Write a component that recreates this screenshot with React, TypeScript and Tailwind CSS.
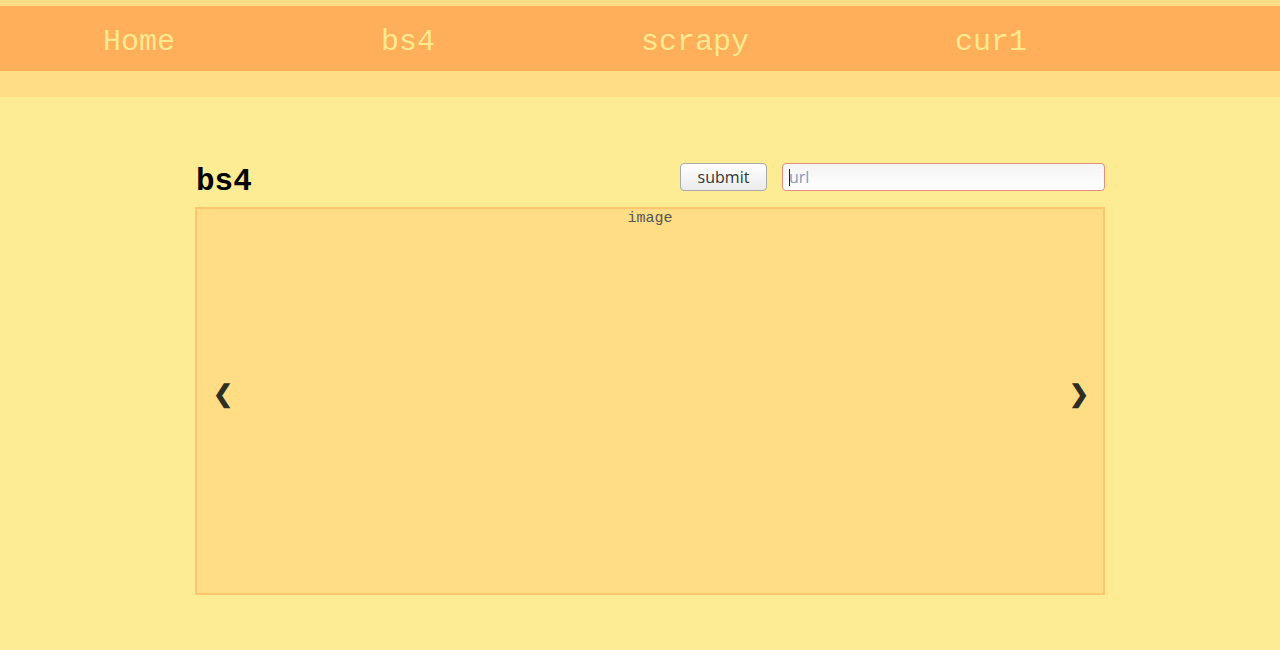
import React from 'react'

const NAV = ['Home', 'bs4', 'scrapy', 'cur1']

const mono = { fontFamily: '"Liberation Mono", "DejaVu Sans Mono", monospace' }

export default function App() {
  return (
    <div className="min-h-screen bg-[#fdec94]">
      {/* header band */}
      <header className="bg-[#ffdd85] pt-[6px] pb-[26px]">
        <ul className="flex h-[65px] items-center bg-[#ffae59]">
          {NAV.map(item => (
            <li
              key={item}
              className="px-[103px] pt-[6px] text-[30px] leading-none text-[#fde98f] font-['Liberation_Mono',monospace]"
            >
              {item}
            </li>
          ))}
        </ul>
      </header>

      {/* main */}
      <main className="ml-[195px] w-[910px] pt-[66px]">
        <div className="flex h-[44px] items-start justify-between">
          <h2 className="mt-[2px] pl-[1px] pt-[1px] text-[31px] font-bold leading-none text-black font-['Liberation_Mono',monospace]">
            bs4
          </h2>
          <div className="flex items-start gap-[15px]">
            <button className="h-[28px] w-[87px] rounded-[4px] border border-[#a9a9a9] bg-gradient-to-b from-white to-[#ebebeb] text-[16px] leading-none text-[#333] font-['Open_Sans',sans-serif] shadow-[inset_0_1px_0_#fff]">
              submit
            </button>
            <div className="relative">
              <input
                placeholder="url"
                className="h-[28px] w-[323px] rounded-[4px] border border-[#e8907c] bg-gradient-to-b from-[#f3f3f3] to-white px-[6px] text-[16px] text-[#333] outline-none placeholder:text-[#8497bd] font-['Open_Sans',sans-serif]"
              />
              <span className="absolute left-[7px] top-[6px] h-[17px] w-[1px] bg-[#222]" />
            </div>
          </div>
        </div>

        <div className="relative h-[388px] border-2 border-[#ffc46e] bg-[#ffdd85]">
          <div className="pt-[1px] text-center text-[15px] leading-[18px] text-[#555]" style={mono}>
            image
          </div>
          <span className="absolute left-[16px] top-[172px] text-[24px] font-bold leading-none text-[#2e2e22]">❮</span>
          <span className="absolute right-[14px] top-[172px] text-[24px] font-bold leading-none text-[#2e2e22]">❯</span>
        </div>
      </main>
    </div>
  )
}
